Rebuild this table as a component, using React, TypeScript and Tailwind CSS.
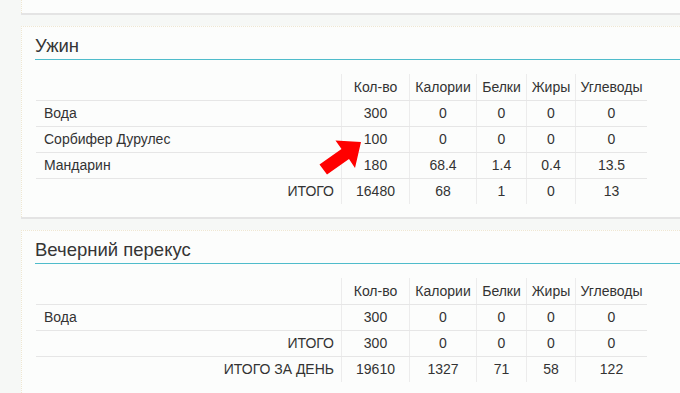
type Row = { name: string; qty: string; cal: string; prot: string; fat: string; carb: string; total?: boolean };

const cols = "grid grid-cols-[305px_68px_67px_50px_49px_72px]";

const dinner: Row[] = [
  { name: "Вода", qty: "300", cal: "0", prot: "0", fat: "0", carb: "0" },
  { name: "Сорбифер Дурулес", qty: "100", cal: "0", prot: "0", fat: "0", carb: "0" },
  { name: "Мандарин", qty: "180", cal: "68.4", prot: "1.4", fat: "0.4", carb: "13.5" },
  { name: "ИТОГО", qty: "16480", cal: "68", prot: "1", fat: "0", carb: "13", total: true },
];

const snack: Row[] = [
  { name: "Вода", qty: "300", cal: "0", prot: "0", fat: "0", carb: "0" },
  { name: "ИТОГО", qty: "300", cal: "0", prot: "0", fat: "0", carb: "0", total: true },
  { name: "ИТОГО ЗА ДЕНЬ", qty: "19610", cal: "1327", prot: "71", fat: "58", carb: "122", total: true },
];

function MealTable({ rows }: { rows: Row[] }) {
  return (
    <div className="w-[611px] text-[14px] text-[#333]">
      {/* header */}
      <div className={`${cols} h-[26px]`}>
        <div />
        {["Кол-во", "Калории", "Белки", "Жиры", "Углеводы"].map((h) => (
          <div key={h} className="flex items-center justify-center border-l border-[#ececec]">
            {h}
          </div>
        ))}
      </div>
      {rows.map((r) => (
        <div key={r.name} className={`${cols} h-[26px] border-t border-[#e6e6e6]`}>
          <div className={`flex items-center ${r.total ? "justify-end pr-[7px]" : "pl-[8px]"}`}>
            {r.name}
          </div>
          {[r.qty, r.cal, r.prot, r.fat, r.carb].map((v, i) => (
            <div key={i} className="flex items-center justify-center border-l border-[#ececec]">
              {v}
            </div>
          ))}
        </div>
      ))}
    </div>
  );
}

function Panel({ title, children }: { title: string; children: React.ReactNode }) {
  return (
    <section className="relative bg-[#fcfdfc] border-l border-t border-dotted border-[#efe7d2] shadow-[0_2px_0_#e4e4e4] pt-[9px] pl-[13px] pb-[13px]">
      <h2 className="text-[18.5px] leading-[20px] text-[#353535] pb-[3px] border-b border-[#4fbccb]">
        {title}
      </h2>
      <div className="relative mt-[14px] pl-px">{children}</div>
    </section>
  );
}

export default function App() {
  return (
    <div
      className="min-h-screen w-[680px] overflow-hidden bg-[#f6f8f6] pl-[21px] flex flex-col gap-[13px]"
      style={{ fontFamily: "'Liberation Sans', Arial, sans-serif" }}
    >
      {/* ── tail of the previous panel ── */}
      <div className="h-[13px] bg-[#fcfdfc] border-l border-dotted border-[#efe7d2] shadow-[0_2px_0_#e4e4e4]" />

      <Panel title="Ужин">
        <MealTable rows={dinner} />
        <svg
          className="absolute left-[281px] top-[60px]"
          width="46"
          height="42"
          viewBox="0 0 46 42"
        >
          <polygon
            points="45,8 39,34 33,25 11,40.5 3.5,30.5 25.5,15 19.5,6.5"
            fill="#ff0000"
          />
        </svg>
      </Panel>

      <Panel title="Вечерний перекус">
        <MealTable rows={snack} />
      </Panel>
    </div>
  );
}
